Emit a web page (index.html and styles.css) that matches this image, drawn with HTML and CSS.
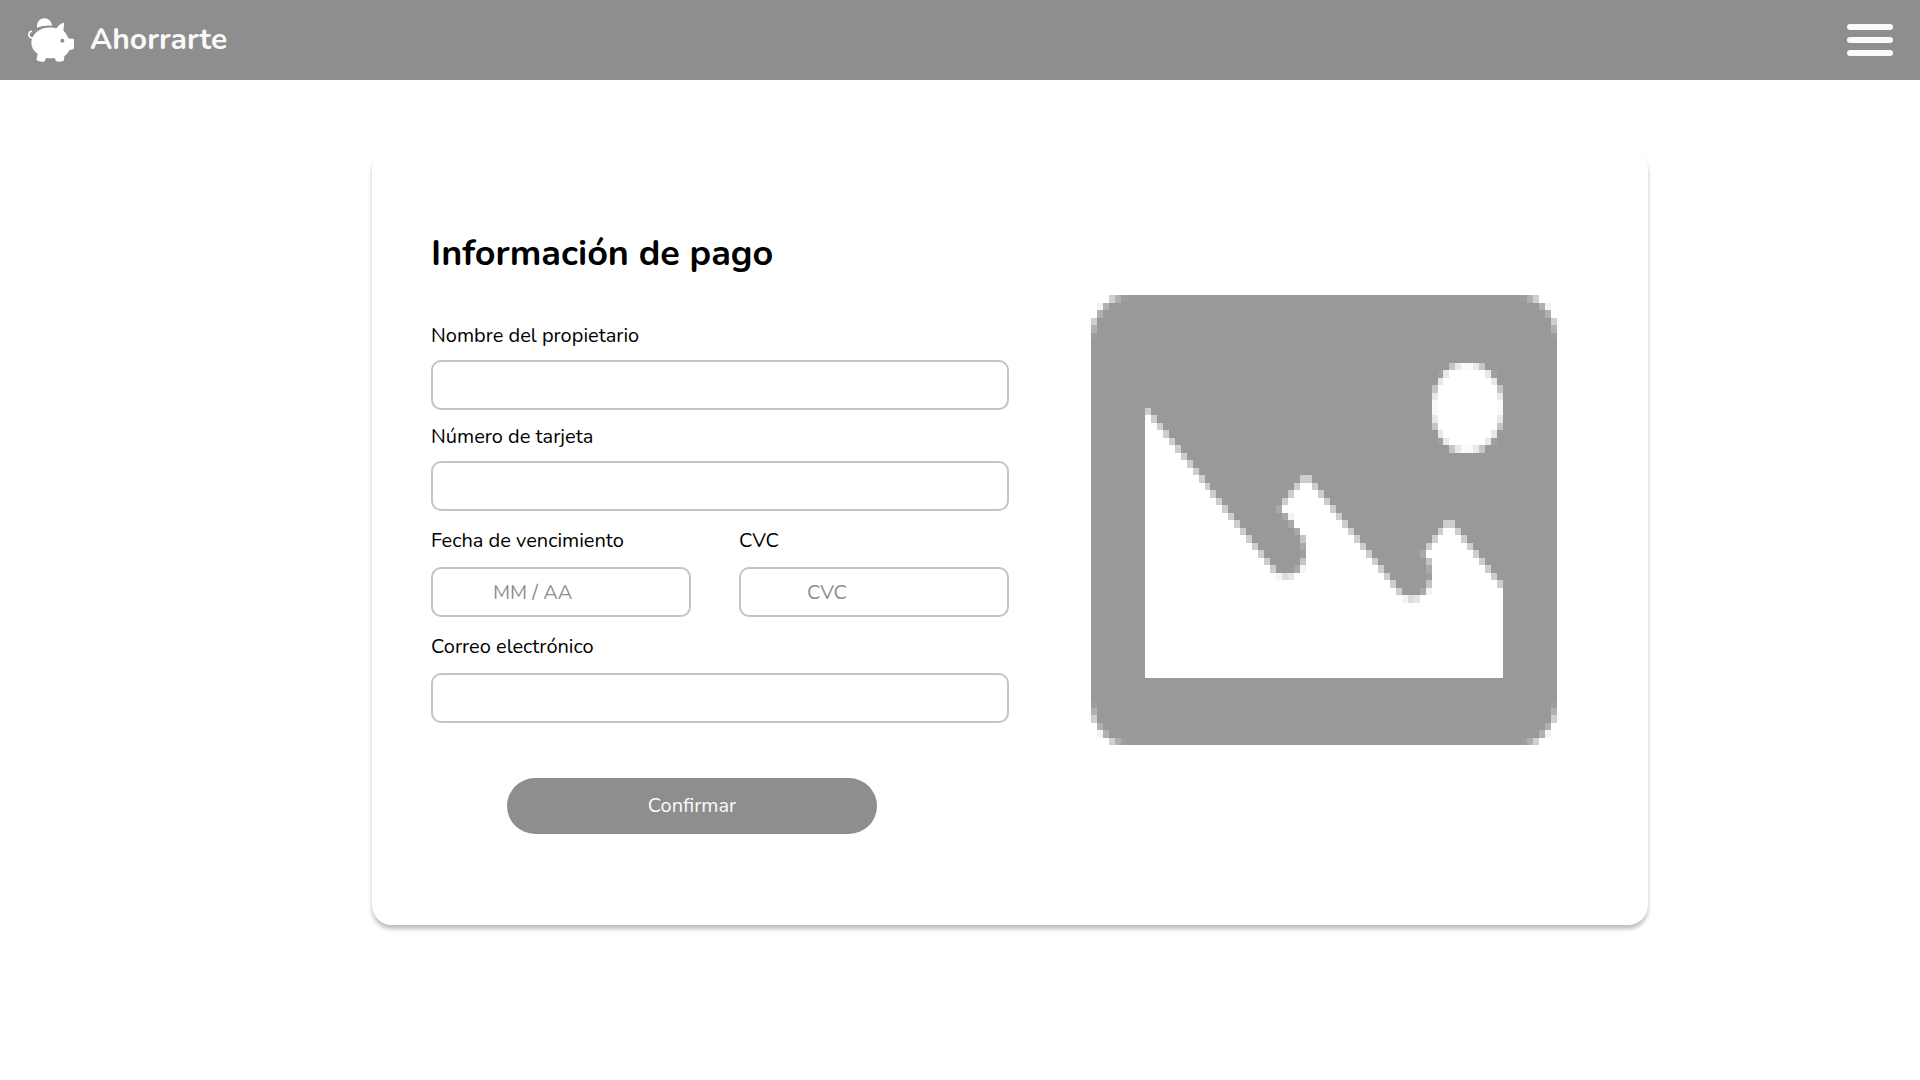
FILE: index.html
```html
<!DOCTYPE html>
<html lang="es">
<head>
  <meta charset="utf-8">
  <meta name="viewport" content="width=device-width, initial-scale=1">
  <title>Ahorrarte - Información de pago</title>
  <link rel="stylesheet" href="styles.css">
</head>
<body>
  <header class="topbar">
    <a class="brand" href="#">
      <svg class="brand-icon" viewBox="24 22 138 132" aria-hidden="true">
        <path fill="#fff" d="M51 51C50 35 59 23 73 23c12 0 22 9 23 22-16-1-31 1-45 6z"/>
        <path fill="none" stroke="#fff" stroke-width="5" stroke-linecap="round" d="M34 62c-8 1-9 11-5 16 3 4 7 5 11 4"/>
        <path fill="#fff" d="M110 53c4-8 11-14 20-17 3 0 2 3 2 7l-2 17c7 6 12 14 15 23 5 2 9 1 13 1 3 0 4 1 4 4v23c0 3-1 4-4 5l-10 3c-4 7-8 13-14 17l-2 6c1 3 1 6-1 8-7 3-15 4-22 2-2-3-4-6-5-10-9 1-17 1-25-1l-5 10c-2 3-5 3-8 2-5 0-11-1-15-4-2-2-2-5 0-8l2-11C41 121 34 110 34 97c0-17 11-31 25-39 15-8 35-9 51-5z"/>
        <circle cx="127" cy="90" r="6" fill="#8e8e8e"/>
      </svg>
      <span>Ahorrarte</span>
    </a>
    <button class="menu" type="button" aria-label="Menú">
      <span class="menu-bar"></span>
      <span class="menu-bar"></span>
      <span class="menu-bar"></span>
    </button>
  </header>

  <main class="card">
    <form class="form">
      <h1 class="title">Información de pago</h1>
      <div class="group">
        <div class="field">
          <label for="owner">Nombre del propietario</label>
          <input id="owner" type="text">
        </div>
        <div class="field">
          <label for="card">Número de tarjeta</label>
          <input id="card" type="text">
        </div>
      </div>
      <div class="pair">
        <div class="field">
          <label for="expiry">Fecha de vencimiento</label>
          <input id="expiry" class="input-expiry" type="text" placeholder="MM / AA">
        </div>
        <div class="field">
          <label for="cvc">CVC</label>
          <input id="cvc" class="input-cvc" type="text" placeholder="CVC">
        </div>
      </div>
      <div class="field">
        <label for="email">Correo electrónico</label>
        <input id="email" type="email">
      </div>
      <button class="submit" type="submit">Confirmar</button>
    </form>

    <svg class="picture" viewBox="0 0 78 60" preserveAspectRatio="none" shape-rendering="crispEdges" role="img" aria-label="Imagen">
      <defs>
        <g id="corner">
          <path fill="#fff" d="M0 0h3v1h-1v1h-1v1h-1z"/>
          <path fill="#f3f3f3" d="M1 1h1v1h-1z"/>
          <path fill="#d0d0d0" d="M3 0h1v1h-1zM0 3h1v1h-1z"/>
          <path fill="#b0b0b0" d="M4 0h1v1h-1zM2 1h1v1h-1zM1 2h1v1h-1zM0 4h1v1h-1z"/>
          <path fill="#9d9d9d" d="M5 0h1v1h-1zM0 5h1v1h-1z"/>
        </g>
        <g id="sun-quarter">
          <path fill="#fff" d="M6 0v6h-6v-2h1v-2h1v-1h2v-1z"/>
          <path fill="#fafafa" d="M5 0h1v1h-1zM0 5h1v1h-1z"/>
          <path fill="#e9e9e9" d="M4 0h1v1h-1zM2 1h1v1h-1zM1 2h1v1h-1zM0 4h1v1h-1z"/>
          <path fill="#c5c5c5" d="M3 0h1v1h-1zM0 3h1v1h-1z"/>
          <path fill="#a1a1a1" d="M1 1h1v1h-1z"/>
        </g>
      </defs>
      <path fill="#999" d="M0 0h78v60h-78z"/>
      <use href="#corner"/>
      <use href="#corner" transform="translate(78 0) scale(-1 1)"/>
      <use href="#corner" transform="translate(0 60) scale(1 -1)"/>
      <use href="#corner" transform="translate(78 60) scale(-1 -1)"/>
      <use href="#sun-quarter" transform="translate(57 9)"/>
      <use href="#sun-quarter" transform="translate(69 9) scale(-1 1)"/>
      <use href="#sun-quarter" transform="translate(57 21) scale(1 -1)"/>
      <use href="#sun-quarter" transform="translate(69 21) scale(-1 -1)"/>
      <path fill="#fff" d="M9 16H10V17H11V18H12V19H13V20H14V21H15V22H16V23H17V24H18V25H19V26H20V27H21V28H22V29H23V30H24V31H25V32H26V33H27V34H28V35H29V36H30V37H35V36H36V32H35V31H34V30H33V29H32V28H33V27H34V26H35V25H37V26H38V27H39V28H40V29H41V30H42V31H43V32H44V33H45V34H46V35H47V36H48V37H49V38H50V39H51V40H56V39H57V35H56V34H57V33H58V32H59V31H61V32H62V33H63V34H64V35H65V36H66V37H67V38H68V39H69V51H9z"/>
      <path fill="#cecece" d="M9 15h1v1h-1zM10 16h1v1h-1zM11 17h1v1h-1zM12 18h1v1h-1zM13 19h1v1h-1zM14 20h1v1h-1zM15 21h1v1h-1zM16 22h1v1h-1zM17 23h1v1h-1zM18 24h1v1h-1zM19 25h1v1h-1zM20 26h1v1h-1zM21 27h1v1h-1zM22 28h1v1h-1zM23 29h1v1h-1zM24 30h1v1h-1zM25 31h1v1h-1zM26 32h1v1h-1zM27 33h1v1h-1zM28 34h1v1h-1zM29 35h1v1h-1zM30 36h1v1h-1z"/>
      <path fill="#cecece" d="M35 24h2v1h-2zM34 25h1v1h-1zM33 26h1v1h-1zM32 27h1v1h-1zM37 25h1v1h-1zM38 26h1v1h-1zM39 27h1v1h-1zM40 28h1v1h-1zM41 29h1v1h-1zM42 30h1v1h-1zM43 31h1v1h-1zM44 32h1v1h-1zM45 33h1v1h-1zM46 34h1v1h-1zM47 35h1v1h-1zM48 36h1v1h-1zM49 37h1v1h-1zM50 38h1v1h-1zM51 39h1v1h-1z"/>
      <path fill="#cecece" d="M59 30h2v1h-2zM58 31h1v1h-1zM57 32h1v1h-1zM56 33h1v1h-1zM61 31h1v1h-1zM62 32h1v1h-1zM63 33h1v1h-1zM64 34h1v1h-1zM65 35h1v1h-1zM66 36h1v1h-1zM67 37h1v1h-1zM68 38h1v1h-1z"/>
      <path fill="#c4c4c4" d="M35 32h1v1h-1zM35 35h1v1h-1zM56 35h1v1h-1zM56 38h1v1h-1z"/>
      <path fill="#a9a9a9" d="M31 28h1v1h-1zM32 29h1v1h-1zM33 30h1v1h-1zM34 31h1v1h-1zM35 33h1v1h-1zM34 36h1v1h-1zM55 34h1v1h-1zM56 36h1v1h-1zM55 39h1v1h-1z"/>
      <path fill="#9f9f9f" d="M35 34h1v1h-1zM56 37h1v1h-1z"/>
      <path fill="#f4f4f4" d="M33 29h1v1h-1zM35 36h1v1h-1zM31 37h1v1h-1zM56 39h1v1h-1zM52 40h1v1h-1z"/>
      <path fill="#dcdcdc" d="M32 37h1v1h-1zM53 40h1v1h-1z"/>
      <path fill="#e5e5e5" d="M33 37h1v1h-1zM54 40h1v1h-1z"/>
    </svg>
  </main>
</body>
</html>
```
FILE: styles.css
```css
* {
  box-sizing: border-box;
}

body {
  min-height: 100vh;
  margin: 0;
  background: #fff;
  color: #000;
  font-family: Nunito, Lato, sans-serif;
  font-size: 20px;
  line-height: 24px;
}

.topbar {
  display: flex;
  align-items: center;
  justify-content: space-between;
  height: 80px;
  padding: 0 27px 0 28px;
  background: #8e8e8e;
}

.brand {
  display: flex;
  align-items: center;
  gap: 16px;
  color: #fafafa;
  font-size: 30px;
  font-weight: 700;
  line-height: 40px;
  text-decoration: none;
}

.brand-icon {
  width: 46px;
  height: 44px;
}

.menu {
  display: flex;
  flex-direction: column;
  gap: 7px;
  width: 46px;
  padding: 0;
  border: 0;
  background: none;
}

.menu-bar {
  height: 6px;
  border-radius: 3px;
  background: #fafafa;
}

.card {
  display: grid;
  grid-template-columns: 1fr 466px;
  column-gap: 82px;
  align-items: start;
  margin: 70px 272px 0 372px;
  padding: 80px 91px 91px 59px;
  border-radius: 20px;
  background: #fff;
  box-shadow: 0 4px 4px rgba(0, 0, 0, 0.25);
}

.form {
  display: flex;
  flex-direction: column;
  gap: 18px;
}

.title {
  margin: 0 0 28px;
  font-size: 36px;
  font-weight: 700;
  line-height: 48px;
}

.group {
  display: grid;
  gap: 15px;
}

.pair {
  display: grid;
  grid-template-columns: 260px 1fr;
  gap: 48px;
}

.field {
  display: flex;
  flex-direction: column;
  gap: 14px;
}

.group .field {
  gap: 12px;
}

.field input {
  width: 100%;
  height: 50px;
  padding: 0 16px;
  border: 2px solid #c4c4c4;
  border-radius: 10px;
  background: #fff;
  color: #000;
  font: inherit;
}

.field input::placeholder {
  color: #8e8e8e;
  opacity: 1;
}

.field .input-expiry {
  padding-left: 60px;
}

.field .input-cvc {
  padding-left: 66px;
}

.submit {
  align-self: center;
  width: 370px;
  height: 56px;
  margin: 37px 56px 0 0;
  border: 0;
  border-radius: 28px;
  background: #8e8e8e;
  color: #fafafa;
  font: inherit;
}

.picture {
  width: 100%;
  height: 450px;
  margin-top: 65px;
}
```
